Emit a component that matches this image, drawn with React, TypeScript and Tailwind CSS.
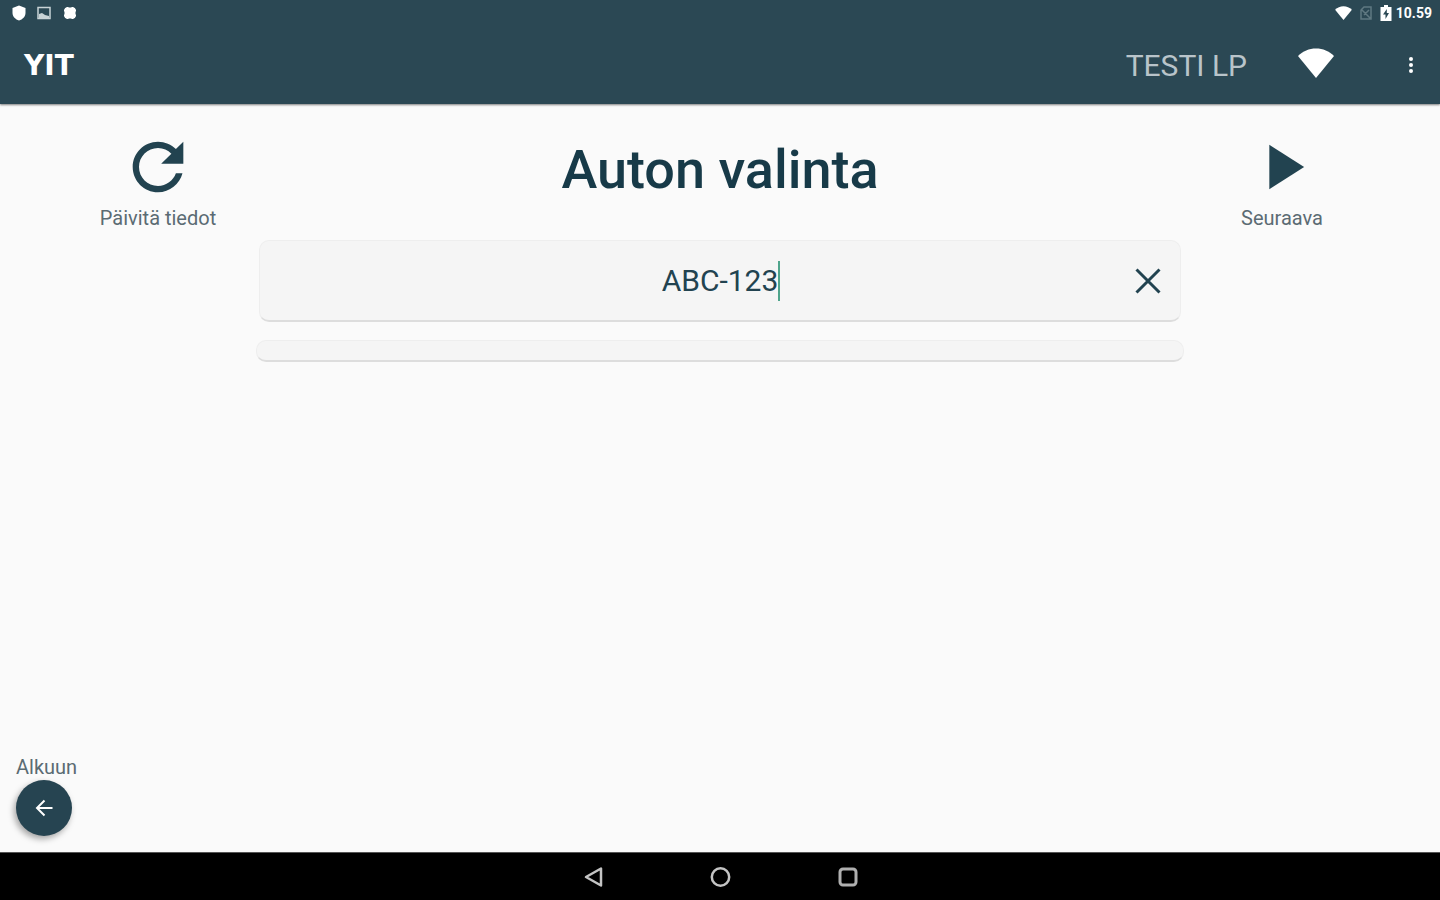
import { useState } from 'react';
import type { ReactNode } from 'react';

function WifiIcon({ className }: { className: string }) {
  return (
    <svg className={className} viewBox="0 0 36 30" fill="currentColor" aria-hidden="true">
      <path d="M18 30 0 8C5 3 11 .5 18 .5S31 3 36 8z" />
    </svg>
  );
}

function StatusBar() {
  return (
    <div className="flex h-[26px] items-center justify-between pl-3 pr-2 text-white">
      <div className="flex items-center gap-[11px]">
        <svg className="h-4 w-[14px]" viewBox="0 0 14 16" fill="currentColor" aria-hidden="true">
          <path d="M7 .5 13.5 3v5c0 3.500-3 6.500-6.500 7.500C3.500 14.500.5 11.500.5 8V3z" />
        </svg>
        <svg className="h-[14px] w-[14px]" viewBox="0 0 14 14" fill="none" stroke="#c9d3d6" aria-hidden="true">
          <rect x="1" y="1.500" width="12" height="11" strokeWidth="1.500" />
          <path d="M2 8l3-1 3 2 4 1v2H2z" fill="#c9d3d6" stroke="none" />
        </svg>
        <svg className="ml-px h-[14px] w-[14px]" viewBox="0 0 14 14" fill="currentColor" aria-hidden="true">
          <rect x="1.500" y="1.500" width="11" height="11" rx="2" />
          <path d="M3.500 1h2v12h-2zM8.500 1h2v12h-2zM1 3.500h12v2H1zM1 8.500h12v2H1z" />
        </svg>
      </div>
      <div className="flex items-center gap-2">
        <WifiIcon className="h-[14px] w-[17px]" />
        <svg className="h-[14px] w-[12px]" viewBox="0 0 12 14" fill="none" stroke="#5f7881" strokeWidth="1.500" aria-hidden="true">
          <path d="M4 1h7v12H1V4zM1 3l10 10M4 9l5-5" />
        </svg>
        <svg className="h-4 w-[12px]" viewBox="0 0 12 16" aria-hidden="true">
          <path d="M4 0h4v2h3.500v14H.5V2H4z" fill="#fff" />
          <path d="M6.800 4 3 9.500h2.500V14L9 8H6.800z" fill="#2b4854" />
        </svg>
        <span className="-ml-1 text-[14px] font-bold leading-4">10.59</span>
      </div>
    </div>
  );
}

function AppBar() {
  return (
    <div className="flex h-[78px] items-center justify-between pl-6 pr-5">
      <span className="pt-px font-['DejaVu_Sans',sans-serif] text-[28px] font-bold leading-8 text-white">YIT</span>
      <div className="flex items-center">
        <span className="pt-px text-[30px] leading-10 text-[#b9c4ca]">TESTI LP</span>
        <WifiIcon className="mb-1 ml-[51px] h-[30px] w-9 text-white" />
        <button type="button" aria-label="Valikko" className="ml-[68px] flex h-10 w-[18px] items-center justify-center text-white">
          <svg className="h-[18px] w-1" viewBox="0 0 4 18" fill="currentColor" aria-hidden="true">
            <circle cx="2" cy="3" r="2" />
            <circle cx="2" cy="9" r="2" />
            <circle cx="2" cy="15" r="2" />
          </svg>
        </button>
      </div>
    </div>
  );
}

function ActionButton({ label, children }: { label: string; children: ReactNode }) {
  return (
    <button type="button" className="flex w-[120px] flex-col items-center">
      <svg className="h-[76px] w-[76px]" viewBox="0 0 24 24" fill="#224350" aria-hidden="true">
        {children}
      </svg>
      <span className="whitespace-nowrap pt-px text-[20px] leading-6 text-[#5b6b73]">{label}</span>
    </button>
  );
}

function PlateField() {
  const [plate, setPlate] = useState('ABC-123');

  return (
    <div className="flex h-[82px] items-center rounded-[10px] border border-b-2 border-[#eeeeee] border-b-[#dddddd] bg-[#f5f5f5] pl-[54px] pr-3">
      <div className="flex flex-1 items-center justify-center">
        <input
          type="text"
          aria-label="Rekisterinumero"
          value={plate}
          onChange={(e) => setPlate(e.target.value)}
          className="field-sizing-content bg-transparent pt-px text-center text-[30px] leading-10 text-[#224350] outline-none"
        />
        <span className="h-10 w-[2px] bg-[#4fa58c]" />
      </div>
      <button type="button" aria-label="Tyhjennä" onClick={() => setPlate('')} className="flex h-10 w-10 items-center justify-center">
        <svg className="h-[26px] w-[26px]" viewBox="0 0 26 26" fill="none" stroke="#224350" strokeWidth="3" aria-hidden="true">
          <path d="m1.500 1.500 23 23M24.500 1.500l-23 23" />
        </svg>
      </button>
    </div>
  );
}

function NavigationBar() {
  return (
    <nav className="flex h-12 items-center justify-center gap-[105px] border-t border-[#555555] bg-black">
      <button type="button" aria-label="Takaisin">
        <svg className="h-[22px] w-[22px]" viewBox="0 0 22 22" fill="none" stroke="#c4c4c4" strokeWidth="2.500" strokeLinejoin="round" aria-hidden="true">
          <path d="M19 2.500v17L4 11z" />
        </svg>
      </button>
      <button type="button" aria-label="Koti">
        <svg className="h-[22px] w-[22px]" viewBox="0 0 22 22" fill="none" stroke="#c4c4c4" strokeWidth="2.500" aria-hidden="true">
          <circle cx="11.500" cy="11" r="8.700" />
        </svg>
      </button>
      <button type="button" aria-label="Viimeisimmät">
        <svg className="h-[22px] w-[22px]" viewBox="0 0 22 22" fill="none" stroke="#b0b0b0" strokeWidth="3" aria-hidden="true">
          <rect x="4" y="3" width="16" height="16" rx="3" />
        </svg>
      </button>
    </nav>
  );
}

export default function App() {
  return (
    <div className="flex min-h-screen flex-col bg-[#fafafa] font-[Roboto,sans-serif]">
      <header className="bg-[#2b4854] shadow-[0_1px_2px_rgba(0,0,0,0.5)]">
        <StatusBar />
        <AppBar />
      </header>

      <main className="flex flex-1 flex-col pt-[25px]">
        <div className="flex items-start justify-between px-[98px]">
          <ActionButton label="Päivitä tiedot">
            <path d="M17.650 6.350C16.200 4.900 14.210 4 12 4c-4.420 0-7.990 3.580-7.990 8s3.570 8 7.990 8c3.730 0 6.840-2.550 7.730-6h-2.080c-.82 2.330-3.040 4-5.650 4-3.310 0-6-2.690-6-6s2.690-6 6-6c1.660 0 3.140.69 4.220 1.780L13 11h7V4z" />
          </ActionButton>
          <h1 className="pt-px text-[54px] font-medium leading-[80px] text-[#173a48]">Auton valinta</h1>
          <ActionButton label="Seuraava">
            <path d="M8 5v14l11-7z" />
          </ActionButton>
        </div>

        <div className="mt-[10px] px-[18%]">
          <PlateField />
          <div className="-mx-[3px] mt-[18px] h-[22px] rounded-[10px] border border-b-2 border-[#eeeeee] border-b-[#dddddd] bg-[#f5f5f5]" />
        </div>

        <div className="mt-auto flex flex-col items-start pb-4 pl-4">
          <label htmlFor="start" className="text-[20px] leading-6 text-[#5b6b73]">Alkuun</label>
          <button
            id="start"
            type="button"
            className="mt-px flex h-14 w-14 items-center justify-center rounded-full bg-[#264451] shadow-[-2px_3px_6px_rgba(0,0,0,0.35)]"
          >
            <svg className="h-6 w-6" viewBox="0 0 24 24" fill="none" stroke="#fff" strokeWidth="2" aria-hidden="true">
              <path d="M20.500 12H5.500M12.500 4.500 5 12l7.500 7.500" />
            </svg>
          </button>
        </div>
      </main>

      <NavigationBar />
    </div>
  );
}
